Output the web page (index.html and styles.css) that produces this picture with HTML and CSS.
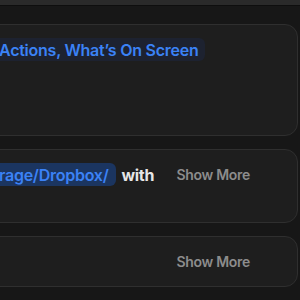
FILE: index.html
```html
<!DOCTYPE html>
<html>
<head>
<meta charset="utf-8">
<link rel="stylesheet" href="styles.css">
</head>
<body>
<div class="topbar"></div>
<div class="list">
  <div class="card card-tall">
    <div class="content">
      <span class="chip chip-muted">Actions, What’s On Screen</span>
    </div>
  </div>
  <div class="card card-mid">
    <div class="content">
      <span class="chip chip-strong">rage/Dropbox/</span>
      <span class="word">with</span>
    </div>
    <button class="more">Show More</button>
  </div>
  <div class="card card-short">
    <div class="content"></div>
    <button class="more">Show More</button>
  </div>
</div>
</body>
</html>
```
FILE: styles.css
```css
html, body {
  margin: 0;
  padding: 0;
  background: #171717;
  overflow: hidden;
  width: 300px;
  height: 300px;
  font-family: "Inter", "Noto Sans", sans-serif;
}
.topbar {
  height: 5px;
  background: #2a2a2a;
  border-bottom: 1px solid #0e0e0e;
}
.list {
  display: flex;
  flex-direction: column;
  gap: 13px;
  padding-top: 18px;
  margin-left: -24px;
  width: 322px;
}
.card {
  box-sizing: border-box;
  background: #1e1e1e;
  border: 1px solid #2f2f2f;
  border-radius: 13px;
  display: flex;
  align-items: flex-start;
  padding: 13px 0 0 16px;
}
.card-tall { height: 112px; }
.card-mid { height: 74px; }
.card-short { height: 51px; padding-top: 0; align-items: center; }
.content {
  flex: 1;
  display: flex;
  align-items: center;
  gap: 6px;
  height: 23px;
}
.chip {
  display: inline-flex;
  align-items: center;
  height: 23px;
  padding: 0 7px 0 6px;
  border-radius: 6px;
  color: #3b82f6;
  font-size: 16px;
  font-weight: 600;
  letter-spacing: -0.25px;
}
.chip-muted { background: #1d2230; }
.chip-strong { background: #1b3560; }
.word {
  color: #e6e6e6;
  font-size: 16px;
  font-weight: 700;
  letter-spacing: -0.3px;
}
.more {
  background: none;
  border: 0;
  padding: 0;
  margin-right: 47px;
  height: 23px;
  color: #8c8c8c;
  font-family: inherit;
  font-size: 14px;
  font-weight: 600;
  letter-spacing: -0.3px;
}
```
